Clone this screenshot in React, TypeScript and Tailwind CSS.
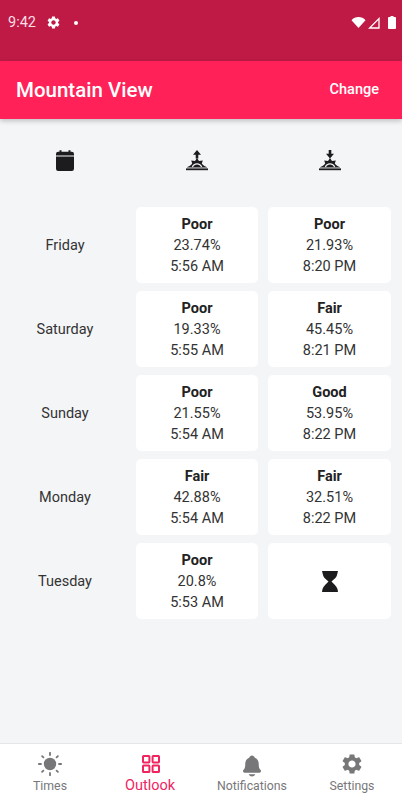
import { IoNotifications } from "react-icons/io5";
import { MdSettings } from "react-icons/md";

type Slot = { rating: string; percent: string; time: string };
type Day = { name: string; sunrise: Slot; sunset?: Slot };

const days: Day[] = [
  {
    name: "Friday",
    sunrise: { rating: "Poor", percent: "23.74%", time: "5:56 AM" },
    sunset: { rating: "Poor", percent: "21.93%", time: "8:20 PM" },
  },
  {
    name: "Saturday",
    sunrise: { rating: "Poor", percent: "19.33%", time: "5:55 AM" },
    sunset: { rating: "Fair", percent: "45.45%", time: "8:21 PM" },
  },
  {
    name: "Sunday",
    sunrise: { rating: "Poor", percent: "21.55%", time: "5:54 AM" },
    sunset: { rating: "Good", percent: "53.95%", time: "8:22 PM" },
  },
  {
    name: "Monday",
    sunrise: { rating: "Fair", percent: "42.88%", time: "5:54 AM" },
    sunset: { rating: "Fair", percent: "32.51%", time: "8:22 PM" },
  },
  {
    name: "Tuesday",
    sunrise: { rating: "Poor", percent: "20.8%", time: "5:53 AM" },
  },
];

function SunIcon({ up }: { up: boolean }) {
  return (
    <svg viewBox="0 0 24 24" className="h-6 w-6" fill="#1c1c1e">
      {up ? <path d="M12 2 8 6.8H10.7V10.5H13.3V6.8H16z" /> : <path d="M12 10.5 8 5.7H10.7V2H13.3V5.7H16z" />}
      <path d="M12 10 14 13 17.8 12.4 16.8 15.6C18 17.5 20 18.6 22 19.2V19.6H2V19.2C4 18.6 6 17.5 7.2 15.6L6.2 12.4 10 13z" />
      <path d="M7.4 19A4.9 4.9 0 0 1 16.6 19" fill="none" stroke="#f4f5f7" strokeWidth="1.3" />
      <rect x="1" y="20.4" width="22" height="1.8" />
    </svg>
  );
}

function CalendarIcon() {
  return (
    <svg viewBox="0 0 24 24" className="h-6 w-6" fill="#1c1c1e">
      <path d="M6.5 2.2h2v1.6h7V2.2h2v1.6h1.3A2.2 2.2 0 0 1 21 6v1.5H3V6a2.2 2.2 0 0 1 2.2-2.2h1.3z" />
      <path d="M3 8.6h18v12.2A2.2 2.2 0 0 1 18.8 23H5.2A2.2 2.2 0 0 1 3 20.8z" />
    </svg>
  );
}

function HourglassIcon() {
  return (
    <svg viewBox="0 0 16 21" className="h-[21px] w-4" fill="#1c1c1e">
      <path d="M0 0H16L15 4C14.5 7 11 9 9.5 10.5 11 12 14.5 15 15.5 18L16 21H0L.5 18C1.5 15 5 12 6.5 10.5 5 9 1.5 7 1 4z" />
    </svg>
  );
}

function SunnyIcon() {
  return (
    <svg viewBox="0 0 24 24" className="h-6 w-6" fill="currentColor" stroke="currentColor">
      <circle cx="12" cy="12" r="6.2" stroke="none" />
      <path
        d="M12 .8V3M12 21V23.2M.8 12H3M21 12H23.2M4.1 4.1 5.4 5.4M18.6 18.6 19.9 19.9M4.1 19.9 5.4 18.6M18.6 5.4 19.9 4.1"
        strokeWidth="1.8"
        strokeLinecap="round"
      />
    </svg>
  );
}

function GridIcon() {
  return (
    <svg viewBox="0 0 18 18" className="ml-[2px] h-[18px] w-[18px]" fill="none" stroke="currentColor" strokeWidth="2">
      <rect x="1" y="1" width="6.4" height="6.4" rx="0.6" />
      <rect x="10.6" y="1" width="6.4" height="6.4" rx="0.6" />
      <rect x="1" y="10.6" width="6.4" height="6.4" rx="0.6" />
      <rect x="10.6" y="10.6" width="6.4" height="6.4" rx="0.6" />
    </svg>
  );
}

function ConditionCard({ slot }: { slot?: Slot }) {
  return (
    <div className="flex h-[76px] flex-col items-center justify-center rounded-[5px] bg-white text-[14.5px] leading-[21px] text-[#333]">
      {slot ? (
        <>
          <div className="font-bold text-[#222]">{slot.rating}</div>
          <div>{slot.percent}</div>
          <div>{slot.time}</div>
        </>
      ) : (
        <HourglassIcon />
      )}
    </div>
  );
}

function NavItem({ label, active, icon }: { label: string; active?: boolean; icon: React.ReactNode }) {
  return (
    <div className={`flex flex-1 flex-col items-center ${active ? "text-[#f0245f]" : "text-[#77777a]"}`}>
      <div className="flex h-[26px] items-center justify-center">{icon}</div>
      <div className={`mt-[1px] leading-4 ${active ? "text-[14.5px]" : "text-[12.3px]"}`}>{label}</div>
    </div>
  );
}

export default function App() {
  return (
    <div className="flex h-[800px] w-[402px] flex-col overflow-hidden bg-[#f4f5f7] font-['Roboto',sans-serif]">
      <div className="flex h-[61px] items-start justify-between bg-[#be1a45] pl-2 pr-[6px] pt-[13px] text-white">
        <div className="flex items-center text-[14.5px] leading-[19px] text-[#fbdde5]">
          <span>9:42</span>
          <MdSettings className="ml-[10px] h-[15px] w-[15px] text-white" />
          <span className="ml-[13px] h-1 w-1 rounded-full bg-white" />
        </div>
        <div className="flex items-center pt-[3px]">
          <svg viewBox="0 0 14 11" className="h-[11px] w-[15px]" fill="white">
            <path d="M7 11 0 3.2C1.8 1.2 4.2 0 7 0s5.2 1.2 7 3.2z" />
          </svg>
          <svg viewBox="0 0 12 12" className="ml-[2px] h-3 w-3" fill="none" stroke="white" strokeWidth="1.3">
            <path d="M11 1.6V11H1.6z" />
          </svg>
          <svg viewBox="0 0 8 13" className="ml-2 h-[13px] w-2" fill="white">
            <path d="M2.5 0h3v1H7a1 1 0 0 1 1 1v10a1 1 0 0 1-1 1H1a1 1 0 0 1-1-1V2a1 1 0 0 1 1-1h1.5z" />
          </svg>
        </div>
      </div>

      <div className="z-10 flex h-[58px] items-center justify-between bg-[#ff2158] pl-4 pr-[23px] text-white shadow-[0_2px_5px_rgba(0,0,0,0.22)]">
        <span className="text-[20.5px] font-medium">Mountain View</span>
        <span className="text-[14.5px] font-medium">Change</span>
      </div>

      <div className="flex-1 pl-1 pr-[11px] pt-[29px]">
        <div className="grid grid-cols-[122px_122px_123px] gap-x-[10px]">
          <div className="flex justify-center">
            <CalendarIcon />
          </div>
          <div className="flex justify-center">
            <SunIcon up />
          </div>
          <div className="flex justify-center">
            <SunIcon up={false} />
          </div>
        </div>
        <div className="mt-[35px] flex flex-col gap-2">
          {days.map((day) => (
            <div key={day.name} className="grid grid-cols-[122px_122px_123px] items-center gap-x-[10px]">
              <div className="pt-[2px] text-center text-[14.5px] text-[#333]">{day.name}</div>
              <ConditionCard slot={day.sunrise} />
              <ConditionCard slot={day.sunset} />
            </div>
          ))}
        </div>
      </div>

      <div className="flex h-[57px] border-t border-[#e6e6e8] bg-white pt-[7px]">
        <div className="flex flex-1">
          <NavItem label="Times" icon={<SunnyIcon />} />
          <NavItem label="Outlook" active icon={<GridIcon />} />
        </div>
        <div className="flex flex-1 pl-[2px]">
          <NavItem label="Notifications" icon={<IoNotifications className="mt-[3px] h-6 w-6" />} />
          <NavItem label="Settings" icon={<MdSettings className="h-6 w-6" />} />
        </div>
      </div>
    </div>
  );
}
